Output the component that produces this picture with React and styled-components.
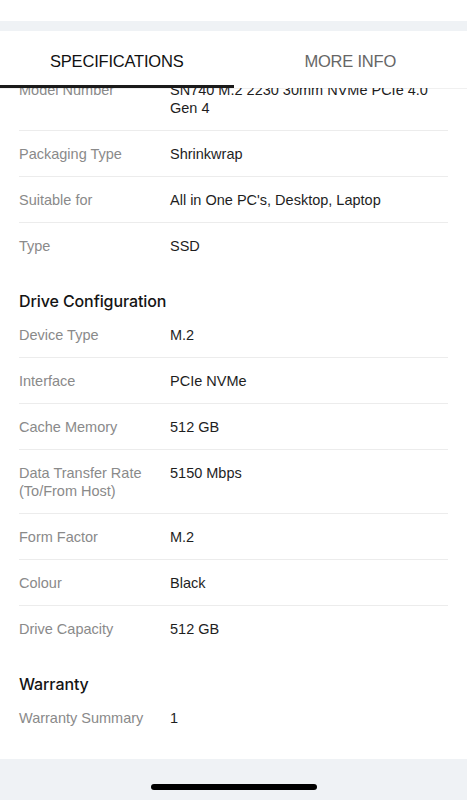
import React from "react";
import styled, { createGlobalStyle } from "styled-components";

const GlobalStyle = createGlobalStyle`
  html, body {
    margin: 0;
    padding: 0;
    background: #fff;
    font-family: "Liberation Sans", Arial, sans-serif;
    -webkit-font-smoothing: antialiased;
  }
`;

const sections = [
  {
    title: null,
    rows: [
      ["Model Number", "SN740 M.2 2230 30mm NVMe PCIe 4.0 Gen 4"],
      ["Packaging Type", "Shrinkwrap"],
      ["Suitable for", "All in One PC's, Desktop, Laptop"],
      ["Type", "SSD"],
    ],
  },
  {
    title: "Drive Configuration",
    rows: [
      ["Device Type", "M.2"],
      ["Interface", "PCIe NVMe"],
      ["Cache Memory", "512 GB"],
      ["Data Transfer Rate (To/From Host)", "5150 Mbps"],
      ["Form Factor", "M.2"],
      ["Colour", "Black"],
      ["Drive Capacity", "512 GB"],
    ],
  },
  {
    title: "Warranty",
    rows: [["Warranty Summary", "1"]],
  },
];

const App = () => {
  return (
    <Page>
      <GlobalStyle />
      <TopGap />
      <Tabs>
        <Tab active>SPECIFICATIONS</Tab>
        <Tab>MORE INFO</Tab>
      </Tabs>
      <Content>
        {sections.map((section, i) => (
          <Section key={i}>
            {section.title && <Heading>{section.title}</Heading>}
            {section.rows.map(([label, value]) => (
              <Row key={label}>
                <Label>{label}</Label>
                <Value>{value}</Value>
              </Row>
            ))}
          </Section>
        ))}
      </Content>
      <Footer>
        <HomeBar />
      </Footer>
    </Page>
  );
};

const Page = styled.div`
  display: flex;
  flex-direction: column;
  min-height: 100vh;
  overflow: hidden;
`;

const TopGap = styled.div`
  height: 21px;
  background: #fff;
  border-bottom: 10px solid #eff2f5;
`;

const Tabs = styled.div`
  position: relative;
  z-index: 2;
  display: grid;
  grid-template-columns: 1fr 1fr;
  height: 57px;
  background: #fff;
  box-shadow: 0 1px 0 rgba(0, 0, 0, 0.06);
`;

const Tab = styled.div`
  display: flex;
  align-items: center;
  justify-content: center;
  font-size: 16.5px;
  letter-spacing: -0.2px;
  color: ${(p) => (p.active ? "#111" : "#666")};
  border-bottom: 3px solid ${(p) => (p.active ? "#1a1a1a" : "transparent")};
  padding-top: 7px;
  box-sizing: border-box;
`;

const Content = styled.div`
  flex: 1;
  margin-top: -21px;
  padding: 0 19px 19px;
  background: #fff;
`;

const Section = styled.div`
  & + & {
    margin-top: 22px;
  }
`;

const Heading = styled.div`
  font-family: Inter, "Liberation Sans", sans-serif;
  font-size: 16px;
  line-height: 22px;
  font-weight: 500;
  letter-spacing: -0.1px;
  color: #141414;
`;

const Row = styled.div`
  display: grid;
  grid-template-columns: 151px 1fr;
  padding: 14px 0 13px;
  border-bottom: 1px solid #ececec;
  font-size: 14.5px;
  line-height: 18px;

  &:last-child {
    border-bottom: none;
  }
`;

const Label = styled.div`
  color: #8a8a8a;
  padding-right: 10px;
`;

const Value = styled.div`
  color: #1e1e1e;
`;

const Footer = styled.div`
  height: 41px;
  background: #eff2f5;
  display: flex;
  justify-content: center;
  padding-top: 25px;
  box-sizing: border-box;
`;

const HomeBar = styled.div`
  width: 166px;
  height: 6px;
  border-radius: 3px;
  background: #000;
`;

export default App;
